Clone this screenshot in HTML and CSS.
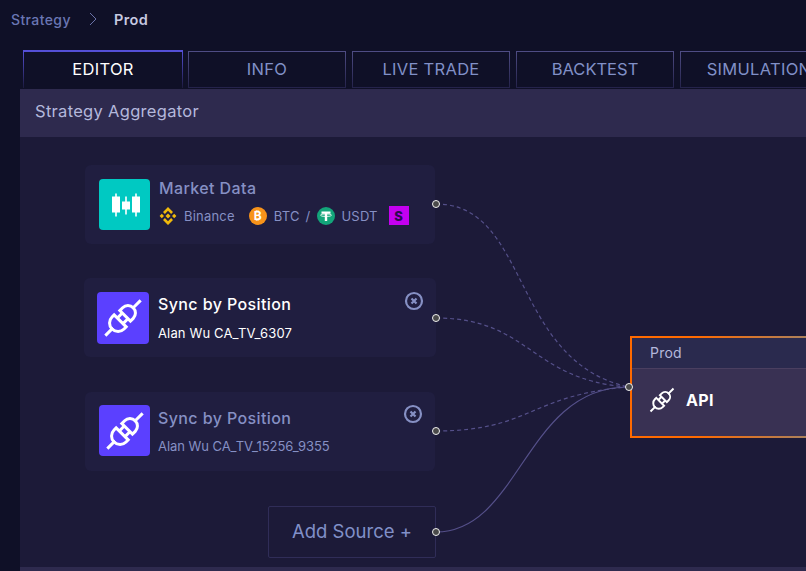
FILE: index.html
```html
<!DOCTYPE html>
<html lang="en">
<head>
  <meta charset="UTF-8" />
  <title>Strategy Aggregator</title>
  <link rel="stylesheet" href="styles.css">
</head>
<body>

  <div class="crumbs">
    <span class="crumb">Strategy</span>
    <svg class="crumb-sep" width="8" height="14" viewBox="0 0 8 14"><path d="M1 1l6 6-6 6" fill="none" stroke="#6a72a8" stroke-width="1"/></svg>
    <span class="crumb-now">Prod</span>
  </div>

  <div class="tabs">
    <div class="tab active">EDITOR</div>
    <div class="tab">INFO</div>
    <div class="tab">LIVE TRADE</div>
    <div class="tab tab-backtest">BACKTEST</div>
    <div class="tab">SIMULATION</div>
  </div>

  <div class="panel">
    <div class="panel-head">Strategy Aggregator</div>
    <div class="canvas">

      <svg class="wires" width="786" height="430" viewBox="20 137 786 430">
        <path class="dash" d="M436 204C530 204 510 360 628 387"/>
        <path class="dash" d="M436 318C530 318 530 380 628 387"/>
        <path class="dash" d="M436 431C530 431 530 395 628 387"/>
        <path class="line" d="M436 532C520 532 525 387 628 387"/>
      </svg>

      <div class="node node-market">
        <div class="icon icon-teal">
          <svg width="30" height="30" viewBox="0 0 30 30" fill="#fff">
            <path d="M5.200 3.500h1.600v3h3.200v16H6.800v4H5.200v-4H2v-16h3.200z"/>
            <path d="M15.200 6.500h1.600v5h3.200v8h-3.200v5h-1.600v-5H12v-8h3.200z"/>
            <path d="M25.200 3.500h1.600v3H30v16h-3.200v4h-1.600v-4H22v-16h3.200z"/>
          </svg>
        </div>
        <div class="node-text">
          <div class="node-title">Market Data</div>
          <div class="market-row">
            <svg class="coin-bnb" width="18" height="18" viewBox="0 0 18 18" fill="#f0b90b">
              <path d="M9 0l5 5-1.900 1.900L9 3.800 5.900 6.900 4 5z"/>
              <path d="M9 18l-5-5 1.900-1.900L9 14.200l3.100-3.100L14 13z"/>
              <path d="M2.800 6.800L5 9l-2.200 2.200L.6 9z"/>
              <path d="M15.200 6.800L17.400 9l-2.200 2.200L13 9z"/>
              <path d="M9 6.500L11.500 9 9 11.500 6.500 9z"/>
            </svg>
            <span class="exchange">Binance</span>
            <span class="coin-btc">₿</span>
            <span class="pair">BTC</span>
            <span class="slash">/</span>
            <svg class="coin-usdt" width="18" height="18" viewBox="0 0 18 18">
              <circle cx="9" cy="9" r="9" fill="#13a57a"/>
              <path d="M4.500 4.500h9v2.200h-3.300V14H7.800V6.700H4.500z" fill="#fff"/>
              <ellipse cx="9" cy="8.200" rx="5.500" ry="1.300" fill="none" stroke="#fff" stroke-width=".8"/>
            </svg>
            <span class="pair">USDT</span>
            <span class="badge-s">S</span>
          </div>
        </div>
      </div>
      <div class="handle h-market"></div>

      <div class="node node-sync1">
        <div class="icon icon-purple">
          <svg width="40" height="40" viewBox="0 0 40 40"><use href="#plug"/></svg>
        </div>
        <div class="node-text sync-text">
          <div class="node-title bright">Sync by Position</div>
          <div class="node-sub bright">Alan Wu CA_TV_6307</div>
        </div>
        <svg class="close" width="20" height="20" viewBox="0 0 20 20"><use href="#close"/></svg>
      </div>
      <div class="handle h-sync1"></div>

      <div class="node node-sync2">
        <div class="icon icon-purple">
          <svg width="40" height="40" viewBox="0 0 40 40"><use href="#plug"/></svg>
        </div>
        <div class="node-text sync-text">
          <div class="node-title">Sync by Position</div>
          <div class="node-sub">Alan Wu CA_TV_15256_9355</div>
        </div>
        <svg class="close" width="20" height="20" viewBox="0 0 20 20"><use href="#close"/></svg>
      </div>
      <div class="handle h-sync2"></div>

      <div class="add-source">Add Source +</div>
      <div class="handle h-add"></div>

      <div class="api-node">
        <div class="api-head">Prod</div>
        <div class="api-body">
          <svg width="26" height="26" viewBox="0 0 40 40"><use href="#plug"/></svg>
          <span class="api-name">API</span>
        </div>
      </div>
      <div class="handle h-api"></div>
    </div>
    <div class="panel-foot"></div>
  </div>

  <svg width="0" height="0" class="defs">
    <defs>
      <g id="plug" fill="none" stroke="#fff" stroke-width="3" transform="rotate(-45 20 20)">
        <path d="M23 12.500h4a7.500 7.500 0 0 1 0 15h-4z"/>
        <path d="M16 11.500h-3a8.500 8.500 0 0 0 0 17h3z"/>
        <path d="M16 16h7M16 24h7"/>
        <path d="M34.500 20h9M4.500 20h-8" stroke-linecap="square"/>
      </g>
      <g id="close">
        <circle cx="10" cy="10" r="8" fill="none" stroke="#8690c4" stroke-width="2.200"/>
        <path d="M7.500 7.500l5 5m0-5l-5 5" stroke="#8690c4" stroke-width="2.200"/>
      </g>
    </defs>
  </svg>

</body>
</html>
```

FILE: styles.css
```css
html, body {
  margin: 0;
  height: 100%;
  overflow: hidden;
}

body {
  width: 806px;
  height: 571px;
  background: #0f1027;
  font-family: "Inter", "Liberation Sans", sans-serif;
  color: #8690c4;
}

.defs {
  position: absolute;
}

.crumbs {
  display: flex;
  align-items: center;
  height: 38px;
  padding-left: 11px;
  font-size: 14px;
  font-weight: 500;
  letter-spacing: 0.4px;
}

.crumb {
  color: #6a76b4;
}

.crumb-sep {
  margin: 0 17px 0 18px;
}

.crumb-now {
  color: #c6c9e0;
  font-size: 14.500px;
  font-weight: 600;
}

.tabs {
  display: flex;
  gap: 6px;
  height: 38px;
  padding: 12px 0 0 23px;
  align-items: flex-end;
}

.tab {
  flex: 0 0 158px;
  height: 37px;
  box-sizing: border-box;
  padding-bottom: 2px;
  display: flex;
  align-items: center;
  justify-content: center;
  font-size: 16.500px;
  letter-spacing: 0.3px;
  white-space: nowrap;
  color: #8190c8;
  border: 1px solid;
  border-image: linear-gradient(#4f4d85, #24224a) 1;
}

.tab-backtest {
  letter-spacing: 0;
}

.tab.active {
  flex-basis: 160px;
  height: 38px;
  color: #fff;
  border-width: 2px 1px 0;
  border-image: linear-gradient(#5550d8, #1a1838) 1;
  margin-right: -1px;
}

.panel {
  margin: 1px 0 0 20px;
  background: #1c1a38;
  border-radius: 4px 0 0 0;
}

.panel-head {
  height: 48px;
  padding-left: 15px;
  line-height: 45px;
  font-size: 16.500px;
  letter-spacing: 0.3px;
  background: #2e2a4e;
  color: #b4b8dc;
}

.canvas {
  position: relative;
  height: 430px;
}

.panel-foot {
  height: 4px;
  background: #2e2a4e;
}

.wires {
  position: absolute;
  left: 0;
  top: 0;
}

.wires path {
  fill: none;
  stroke: #55508a;
  stroke-width: 1.200;
}

.wires .dash {
  stroke-dasharray: 4 3;
}

.node {
  position: absolute;
  display: flex;
  box-sizing: border-box;
  background: #201e40;
  border-radius: 6px;
}

.node-market {
  left: 65px;
  top: 28px;
  width: 350px;
  height: 79px;
  padding: 14px;
}

.node-sync1 {
  left: 64px;
  top: 141px;
  width: 352px;
  height: 79px;
  padding: 14px 13px;
}

.node-sync2 {
  left: 65px;
  top: 255px;
  width: 350px;
  height: 79px;
  padding: 13px 14px;
}

.node-sync1 .icon {
  flex-basis: 52px;
  height: 52px;
}

.icon {
  flex: 0 0 51px;
  height: 51px;
  display: flex;
  align-items: center;
  justify-content: center;
  border-radius: 4px;
}

.icon-teal {
  background: #00c9c2;
}

.icon-purple {
  background: #5b40ff;
}

.node-text {
  margin-left: 9px;
}

.node-title {
  font-size: 16px;
  font-weight: 500;
  line-height: 19px;
  letter-spacing: 0.4px;
  color: #8690c4;
}

.bright {
  color: #fff;
}

.sync-text .node-title {
  margin-top: 3px;
  letter-spacing: 0.4px;
}

.node-sync2 .node-text {
  margin-left: 8px;
}

.node-sync2 .node-title {
  margin-top: 4px;
}

.node-sub {
  margin-top: 11px;
  font-size: 13px;
  line-height: 16px;
  letter-spacing: 0.15px;
}

.node-sync2 .node-sub {
  margin-top: 10px;
  letter-spacing: -0.05px;
}

.market-row {
  display: flex;
  align-items: center;
  margin-top: 8px;
  font-size: 13px;
  letter-spacing: 0.2px;
  height: 19px;
}

.exchange {
  margin: 0 14px 0 7px;
}

.pair {
  margin-left: 7px;
}

.slash {
  margin: 0 6px 0 6px;
}

.coin-btc {
  width: 18px;
  height: 18px;
  border-radius: 50%;
  display: flex;
  align-items: center;
  justify-content: center;
  color: #fff;
  font-size: 12px;
  font-weight: 700;
  background: #f7931a;
}

.badge-s {
  width: 20px;
  height: 19px;
  margin-left: 11px;
  background: #c400f0;
  color: #2a0a50;
  font-size: 13px;
  font-weight: 800;
  display: flex;
  align-items: center;
  justify-content: center;
}

.close {
  position: absolute;
  right: 12px;
  top: 13px;
}

.node-sync2 .close {
  top: 12px;
  right: 12px;
}

.add-source {
  position: absolute;
  left: 248px;
  top: 369px;
  width: 168px;
  height: 52px;
  box-sizing: border-box;
  padding-bottom: 2px;
  border: 1px solid #302d58;
  border-radius: 2px;
  display: flex;
  align-items: center;
  justify-content: center;
  font-size: 18.500px;
  color: #8190c8;
}

.api-node {
  position: absolute;
  left: 610px;
  top: 199px;
  width: 220px;
  height: 102px;
  box-sizing: border-box;
  border: 2px solid;
  border-image: linear-gradient(90deg, #ff6a00 30%, #8a8a80) 1;
  background: #393153;
}

.api-head {
  height: 30px;
  padding-left: 18px;
  line-height: 30px;
  font-size: 14px;
  letter-spacing: 0.2px;
  color: #b4b8dc;
  background: #2a2a4e;
  border-bottom: 1px solid #4a3f60;
}

.api-body {
  display: flex;
  align-items: center;
  height: 62px;
  padding-left: 17px;
  gap: 11px;
}

.api-name {
  font-size: 16px;
  font-weight: 700;
  letter-spacing: 0.3px;
  color: #fff;
}

.handle {
  position: absolute;
  width: 8px;
  height: 8px;
  box-sizing: border-box;
  background: #4a4a4a;
  border: 1.500px solid #f0f0f0;
  border-radius: 50%;
}

.h-market { left: 412px; top: 63px; }
.h-sync1 { left: 412px; top: 177px; }
.h-sync2 { left: 412px; top: 290px; }
.h-add { left: 412px; top: 391px; }
.h-api { left: 605px; top: 246px; }
```
